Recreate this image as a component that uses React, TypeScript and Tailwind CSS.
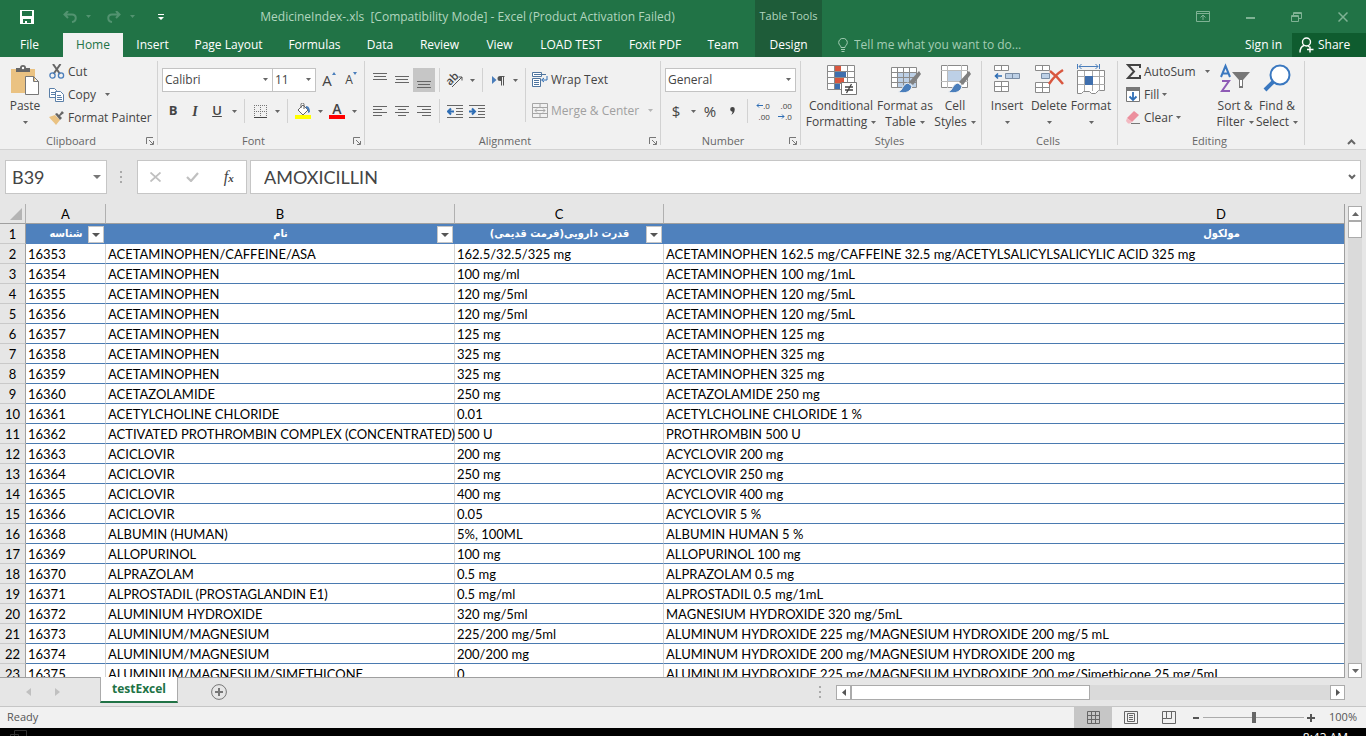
import React from 'react';

const TABS = [
  { label: 'Insert', width: 'w-[59px]' },
  { label: 'Page Layout', width: 'w-[93px]' },
  { label: 'Formulas', width: 'w-[79px]' },
  { label: 'Data', width: 'w-[52px]' },
  { label: 'Review', width: 'w-[67px]' },
  { label: 'View', width: 'w-[53px]' },
  { label: 'LOAD TEST', width: 'w-[90px]' },
  { label: 'Foxit PDF', width: 'w-[78px]' },
  { label: 'Team', width: 'w-[58px]' },
];

const ROWS = [
  ['16353', 'ACETAMINOPHEN/CAFFEINE/ASA', '162.5/32.5/325 mg', 'ACETAMINOPHEN 162.5 mg/CAFFEINE 32.5 mg/ACETYLSALICYLSALICYLIC ACID 325 mg'],
  ['16354', 'ACETAMINOPHEN', '100 mg/ml', 'ACETAMINOPHEN 100 mg/1mL'],
  ['16355', 'ACETAMINOPHEN', '120 mg/5ml', 'ACETAMINOPHEN 120 mg/5mL'],
  ['16356', 'ACETAMINOPHEN', '120 mg/5ml', 'ACETAMINOPHEN 120 mg/5mL'],
  ['16357', 'ACETAMINOPHEN', '125 mg', 'ACETAMINOPHEN 125 mg'],
  ['16358', 'ACETAMINOPHEN', '325 mg', 'ACETAMINOPHEN 325 mg'],
  ['16359', 'ACETAMINOPHEN', '325 mg', 'ACETAMINOPHEN 325 mg'],
  ['16360', 'ACETAZOLAMIDE', '250 mg', 'ACETAZOLAMIDE 250 mg'],
  ['16361', 'ACETYLCHOLINE CHLORIDE', '0.01', 'ACETYLCHOLINE CHLORIDE 1 %'],
  ['16362', 'ACTIVATED PROTHROMBIN COMPLEX (CONCENTRATED)', '500 U', 'PROTHROMBIN 500 U'],
  ['16363', 'ACICLOVIR', '200 mg', 'ACYCLOVIR 200 mg'],
  ['16364', 'ACICLOVIR', '250 mg', 'ACYCLOVIR 250 mg'],
  ['16365', 'ACICLOVIR', '400 mg', 'ACYCLOVIR 400 mg'],
  ['16366', 'ACICLOVIR', '0.05', 'ACYCLOVIR 5 %'],
  ['16368', 'ALBUMIN (HUMAN)', '5%, 100ML', 'ALBUMIN HUMAN 5 %'],
  ['16369', 'ALLOPURINOL', '100 mg', 'ALLOPURINOL 100 mg'],
  ['16370', 'ALPRAZOLAM', '0.5 mg', 'ALPRAZOLAM 0.5 mg'],
  ['16371', 'ALPROSTADIL (PROSTAGLANDIN E1)', '0.5 mg/ml', 'ALPROSTADIL 0.5 mg/1mL'],
  ['16372', 'ALUMINIUM HYDROXIDE', '320 mg/5ml', 'MAGNESIUM HYDROXIDE 320 mg/5mL'],
  ['16373', 'ALUMINIUM/MAGNESIUM', '225/200 mg/5ml', 'ALUMINUM HYDROXIDE 225 mg/MAGNESIUM HYDROXIDE 200 mg/5 mL'],
  ['16374', 'ALUMINIUM/MAGNESIUM', '200/200 mg', 'ALUMINUM HYDROXIDE 200 mg/MAGNESIUM HYDROXIDE 200 mg'],
  ['16375', 'ALUMINIUM/MAGNESIUM/SIMETHICONE', '0', 'ALUMINUM HYDROXIDE 225 mg/MAGNESIUM HYDROXIDE 200 mg/Simethicone 25 mg/5mL'],
];

const HEADERS = ['شناسه', 'نام', 'قدرت دارویی(فرمت قدیمی)', 'مولکول'];

const Tri = ({ className = 'fill-[#666]' }: { className?: string }) => (
  <svg width="5" height="3" viewBox="0 0 5 3" className={`shrink-0 ${className}`}>
    <path d="M0 0h5L2.5 3z" />
  </svg>
);

const Drop = ({ label, className = '' }: { label: string; className?: string }) => (
  <button aria-label={label} className={`flex h-6 w-3 shrink-0 items-center justify-center ${className}`}>
    <Tri />
  </button>
);

const Sep = () => <span className="mx-1 h-6 w-px shrink-0 bg-[#d2d2d2]" />;

interface IconButtonProps {
  label: string;
  active?: boolean;
  children: React.ReactNode;
}

const IconButton = ({ label, active, children }: IconButtonProps) => (
  <button
    aria-label={label}
    className={`flex h-6 w-[22px] shrink-0 items-center justify-center text-[#444] ${active ? 'bg-[#c6c6c6]' : ''}`}
  >
    {children}
  </button>
);

interface GroupProps {
  title: string;
  width: string;
  launcher?: boolean;
  children: React.ReactNode;
}

const Group = ({ title, width, launcher, children }: GroupProps) => (
  <section aria-label={title} className={`relative flex shrink-0 flex-col pt-[3px] ${width}`}>
    <div className="flex h-[70px] pl-1">{children}</div>
    <div className="mt-[3px] flex h-4 items-center">
      <span className={`flex-1 text-center text-[11px] leading-4 text-[#666] ${launcher ? 'pr-5' : 'pl-3 pr-4'}`}>{title}</span>
      {launcher && (
        <button aria-label={`${title} settings`} className="-ml-4 mr-1">
          <svg width="8" height="8" viewBox="0 0 8 8" fill="none" stroke="#777">
            <path d="M.5 7V.5H7M3 3l4 4M7.500 4v3.500H4" />
          </svg>
        </button>
      )}
    </div>
    <span className="absolute right-0 top-1 h-[84px] w-px bg-[#d2d2d2]" />
  </section>
);

interface BigButtonProps {
  width: string;
  lines: [string, string?];
  icon: React.ReactNode;
}

const BigButton = ({ width, lines, icon }: BigButtonProps) => (
  <button className={`flex shrink-0 flex-col items-center pt-1 text-[12px] leading-4 text-[#444] ${width}`}>
    <span className="flex h-8 items-center">{icon}</span>
    <span className="mt-[2px] whitespace-nowrap">{lines[0]}</span>
    <span className="flex h-4 items-center gap-1 whitespace-nowrap">
      {lines[1]}
      <Tri />
    </span>
  </button>
);

const SmallButton = ({ icon, text, arrow }: { icon: React.ReactNode; text: string; arrow?: string }) => (
  <button className="flex h-[23px] items-center whitespace-nowrap text-[12px] text-[#444]">
    <span className="mr-[3px] flex w-4 shrink-0 justify-center">{icon}</span>
    {text}
    {arrow && (
      <span className={arrow}>
        <Tri />
      </span>
    )}
  </button>
);

const Lines = ({ rows, h = 16 }: { rows: [number, number, number][]; h?: number }) => (
  <svg width="14" height={h} viewBox={`0 0 14 ${h}`} stroke="#666">
    {rows.map(([y, a, b]) => (
      <path key={y} d={`M${a} ${y + 0.5}H${b}`} />
    ))}
  </svg>
);

const ComboBox = ({ label, value, width }: { label: string; value: string; width: string }) => (
  <span className={`relative flex h-6 shrink-0 ${width}`}>
    <select
      aria-label={label}
      className="w-full appearance-none border border-[#c3c3c3] bg-white pl-[2px] text-[12px] text-[#444] outline-none"
    >
      <option>{value}</option>
    </select>
    <span className="pointer-events-none absolute right-[5px] top-[10px]">
      <Tri />
    </span>
  </span>
);

const TitleBar = () => (
  <header className="flex h-[57px] shrink-0 bg-[#217346] text-[12px] text-white">
    <div className="flex w-[755px] shrink-0 flex-col">
      <div className="flex h-[33px] items-center">
        <div className="flex w-[180px] shrink-0 items-center pl-5">
          <button aria-label="Save">
            <svg width="14" height="14" viewBox="0 0 14 14">
              <path fill="#fff" fillRule="evenodd" d="M0 0h14v14H0zM2 1v5h10V1zM3 9v4h2v-2h2v2h4V9z" />
            </svg>
          </button>
          <button aria-label="Undo" className="ml-[29px]">
            <svg width="14" height="12" viewBox="0 0 14 12" fill="none" stroke="#529370" strokeWidth="2">
              <path d="M5 0L1.500 3.500 5 7M2 3.500h7c5 0 5 7 0 7.500" />
            </svg>
          </button>
          <span className="ml-[9px]"><Tri className="fill-[#529370]" /></span>
          <button aria-label="Redo" className="ml-[16px]">
            <svg width="14" height="12" viewBox="0 0 14 12" fill="none" stroke="#529370" strokeWidth="2">
              <path d="M9 0l3.500 3.500L9 7M12 3.500H5c-5 0-5 7 0 7.500" />
            </svg>
          </button>
          <span className="ml-[9px]"><Tri className="fill-[#529370]" /></span>
          <button aria-label="Customize Quick Access Toolbar" className="ml-[23px]">
            <svg width="6" height="6" viewBox="0 0 6 6" fill="#fff">
              <path d="M0 0h6v1H0zM0 3h6L3 6z" />
            </svg>
          </button>
        </div>
        <h1 className="flex-1 whitespace-pre text-center text-[#b1d6bf]">
          {'MedicineIndex-.xls  [Compatibility Mode] - Excel (Product Activation Failed)'}
        </h1>
      </div>
      <nav className="flex h-6 items-center">
        <button className="w-[63px] shrink-0 pr-1 text-center">File</button>
        <button className="h-full w-[60px] shrink-0 bg-[#f1f1f1] text-[#217346]">Home</button>
        {TABS.map((tab) => (
          <button key={tab.label} className={`shrink-0 whitespace-nowrap text-center ${tab.width}`}>
            {tab.label}
          </button>
        ))}
      </nav>
    </div>
    <div className="flex w-[67px] shrink-0 flex-col bg-[#1e5c39]">
      <span className="flex h-[33px] items-center justify-center whitespace-nowrap text-[11px] text-[#b1d6bf]">Table Tools</span>
      <button className="h-6">Design</button>
    </div>
    <div className="flex flex-1 flex-col">
      <div className="flex h-[33px] items-center justify-end gap-[36px] pr-[18px]">
        <button aria-label="Ribbon display options">
          <svg width="14" height="11" viewBox="0 0 14 11" fill="none" stroke="#7fb294">
            <path d="M.5.5h13v10H.5zM.5 2.500h13M7 9V4M4.500 6.500L7 4l2.500 2.500" />
          </svg>
        </button>
        <button aria-label="Minimize">
          <svg width="9" height="10" viewBox="0 0 9 10" fill="#7fb294"><path d="M0 5h9v2H0z" /></svg>
        </button>
        <button aria-label="Restore">
          <svg width="11" height="10" viewBox="0 0 11 10" fill="none" stroke="#7fb294">
            <path d="M.5 3.500h7v6h-7zM.5 4.500h7M2.500 3V.5h8v6H8M3 1.500h7" />
          </svg>
        </button>
        <button aria-label="Close">
          <svg width="10" height="10" viewBox="0 0 10 10" stroke="#7fb294" strokeWidth="1.5"><path d="M.5.5l9 9M9.500.5l-9 9" /></svg>
        </button>
      </div>
      <div className="flex h-6 items-center">
        <svg className="ml-4 shrink-0" width="10" height="14" viewBox="0 0 10 14" fill="none" stroke="#a4cdb4">
          <path d="M3 9.500C3 7.500.7 7 .7 4.600a4.300 4.300 0 0 1 8.600 0C9.300 7 7 7.500 7 9.500zM3 11.500h4M3.500 13.500h3" />
        </svg>
        <input
          aria-label="Tell me what you want to do"
          placeholder="Tell me what you want to do..."
          className="ml-[6px] min-w-0 flex-1 bg-transparent outline-none placeholder:text-[#a4cdb4]"
        />
        <button className="mr-[10px] whitespace-nowrap">Sign in</button>
        <button className="flex h-6 w-[74px] items-center gap-1 bg-[#0f5c2f] pl-[7px]">
          <svg width="15" height="16" viewBox="0 0 15 16" fill="none" stroke="#fff" strokeWidth="1.4">
            <circle cx="7.500" cy="5" r="4" />
            <path d="M5 8.500C2 9.500 1 12 1 15.500M9 9l1.500 1M11 9.500v6M8 12.500h6.500" />
          </svg>
          Share
        </button>
      </div>
    </div>
  </header>
);

const GridIcon = ({ children }: { children?: React.ReactNode }) => (
  <svg width="32" height="32" viewBox="0 0 32 32" fill="none" className="overflow-visible">
    {children}
  </svg>
);

const Brush = () => (
  <>
    <path d="M30 7l2 3-8 11-4-3z" fill="#808080" />
    <path d="M19 19l4 3c-1 6-7 8-14 6 5-1 4-8 10-9z" fill="#4a7ebb" stroke="#f1f1f1" />
  </>
);

const Ribbon = () => (
  <div className="flex h-[93px] shrink-0 overflow-hidden border-b border-[#d2d2d2] bg-[#f1f1f1]">
    <Group title="Clipboard" width="w-[158px]" launcher>
      <BigButton
        width="w-[42px]"
        lines={['Paste']}
        icon={
          <svg width="30" height="30" viewBox="0 0 30 30">
            <path d="M1 4h24v24H1z" fill="#eac282" />
            <path d="M6 7V3h4a3 3 0 0 1 6 0h4v4z" fill="#666" />
            <circle cx="13" cy="3" r="1.200" fill="#fff" />
            <path d="M15.500 11.500h8l5 5v13h-13zM23.500 11.500v5h5" fill="#fff" stroke="#777" />
          </svg>
        }
      />
      <div className="ml-[3px] flex flex-col">
        <SmallButton
          text="Cut"
          icon={
            <svg width="16" height="15" viewBox="0 0 16 15" fill="none">
              <path d="M4 0l7 10M11.500 0l-7 10" stroke="#666" strokeWidth="2" />
              <circle cx="3.500" cy="11.500" r="2.600" stroke="#4a7ebb" strokeWidth="1.300" />
              <circle cx="12" cy="11.500" r="2.600" stroke="#4a7ebb" strokeWidth="1.300" />
            </svg>
          }
        />
        <SmallButton
          text="Copy"
          arrow="ml-[9px]"
          icon={
            <svg width="16" height="14" viewBox="0 0 16 14" fill="#fff" stroke="#5a7fa8">
              <path d="M.5.5h5l2 2v7h-7zM2 4.500h4M2 6.500h4" />
              <path d="M6.500 3.500h5l3 3v7h-8zM8 7.500h4M8 9.500h5M8 11.500h5" />
            </svg>
          }
        />
        <SmallButton
          text="Format Painter"
          icon={
            <svg width="16" height="14" viewBox="0 0 16 14">
              <path d="M0 6l6-2 5 5-4 5C5 11 2 9 0 6z" fill="#eac282" />
              <path d="M6 3l2-1 2 2 3-4 2 2-4 3 2 2-2 2z" fill="#666" />
            </svg>
          }
        />
      </div>
    </Group>

    <Group title="Font" width="w-[207px]" launcher>
      <div className="flex flex-col gap-[7px] pt-2">
        <div className="flex">
          <ComboBox label="Font" value="Calibri" width="w-[111px]" />
          <span className="-ml-px flex"><ComboBox label="Font size" value="11" width="w-[44px]" /></span>
          <span className="ml-[2px] flex">
            <IconButton label="Increase font size">
              <span className="flex items-start text-[15px] leading-4">
                A
                <svg width="4" height="3" viewBox="0 0 4 3" fill="#4a7ebb"><path d="M0 3h4L2 0z" /></svg>
              </span>
            </IconButton>
            <IconButton label="Decrease font size">
              <span className="flex items-start text-[12px] leading-4">
                A
                <svg width="4" height="3" viewBox="0 0 4 3" fill="#4a7ebb"><path d="M0 0h4L2 3z" /></svg>
              </span>
            </IconButton>
          </span>
        </div>
        <div className="flex">
          <IconButton label="Bold"><span className="text-[13px] font-bold">B</span></IconButton>
          <IconButton label="Italic"><span className="font-['Liberation_Serif',serif] text-[14px] font-bold italic">I</span></IconButton>
          <IconButton label="Underline"><span className="text-[13px] font-semibold underline">U</span></IconButton>
          <Drop label="Underline style" />
          <Sep />
          <IconButton label="Borders">
            <svg width="13" height="13" viewBox="0 0 13 13" fill="none" stroke="#777">
              <path strokeDasharray="1 1" d="M.5 0v12M6.500 0v12M12.500 0v12M0 .5h13M0 6.500h13" />
              <path d="M0 12.500h13" stroke="#444" />
            </svg>
          </IconButton>
          <Drop label="Border style" />
          <Sep />
          <IconButton label="Fill color">
            <svg width="17" height="16" viewBox="0 0 17 16" fill="none">
              <path d="M3 7l5-5 5 5-5 5zM6 5V1.500a1.500 1.500 0 0 1 3 0V6" fill="#fff" stroke="#666" />
              <path d="M11 3c3 0 4 3 4 6l-2 1c0-3 0-4-2-5z" fill="#4a7ebb" />
              <path d="M0 12h16v4H0z" fill="#ff0" />
            </svg>
          </IconButton>
          <Drop label="Fill color menu" />
          <IconButton label="Font color">
            <span className="flex h-4 w-4 justify-center border-b-4 border-[#f00] text-[14px] font-semibold leading-3">A</span>
          </IconButton>
          <Drop label="Font color menu" />
        </div>
      </div>
    </Group>

    <Group title="Alignment" width="w-[296px]" launcher>
      <div className="flex flex-col gap-[7px] pt-2">
        <div className="flex">
          <IconButton label="Top align"><Lines rows={[[1, 0, 14], [4, 1, 13], [7, 0, 14]]} /></IconButton>
          <IconButton label="Middle align"><Lines rows={[[4, 0, 14], [7, 1, 13], [10, 0, 14]]} /></IconButton>
          <IconButton label="Bottom align" active><Lines rows={[[9, 0, 14], [12, 1, 13], [15, 0, 14]]} /></IconButton>
          <Sep />
          <IconButton label="Orientation">
            <svg className="overflow-visible" width="17" height="16" viewBox="0 0 17 16" fill="none" stroke="#555">
              <text x="0" y="11" transform="rotate(-45 5 9)" fontSize="11" fontWeight="600" fill="#444" stroke="none">ab</text>
              <path d="M5 15L15 5M11.500 5H15v3.500" />
            </svg>
          </IconButton>
          <Drop label="Orientation menu" />
          <Sep />
          <IconButton label="Text direction">
            <svg width="13" height="11" viewBox="0 0 13 11">
              <path d="M0 1l4.500 4L0 9z" fill="#4a7ebb" />
              <path d="M12.500 1H8a2.500 2.500 0 0 0 0 5h1v4.500h1V2h1v8.500h1V2h.5z" fill="#555" />
            </svg>
          </IconButton>
          <Drop label="Text direction menu" />
        </div>
        <div className="flex">
          <IconButton label="Align left"><Lines h={12} rows={[[1, 0, 14], [4, 0, 9], [7, 0, 14], [10, 0, 9]]} /></IconButton>
          <IconButton label="Center"><Lines h={12} rows={[[1, 0, 14], [4, 3, 11], [7, 0, 14], [10, 3, 11]]} /></IconButton>
          <IconButton label="Align right"><Lines h={12} rows={[[1, 0, 14], [4, 5, 14], [7, 0, 14], [10, 5, 14]]} /></IconButton>
          <Sep />
          <IconButton label="Decrease indent">
            <svg width="16" height="13" viewBox="0 0 16 13" fill="none" stroke="#666">
              <path d="M0 .5h16M9 3.500h7M9 6.500h7M9 9.500h7M0 12.500h16" />
              <path d="M7 6.500H1M4 3.500l-3 3 3 3" stroke="#2f6eb5" strokeWidth="2" />
            </svg>
          </IconButton>
          <IconButton label="Increase indent">
            <svg width="16" height="13" viewBox="0 0 16 13" fill="none" stroke="#666">
              <path d="M0 .5h16M9 3.500h7M9 6.500h7M9 9.500h7M0 12.500h16" />
              <path d="M0 6.500h6M3 3.500l3 3-3 3" stroke="#2f6eb5" strokeWidth="2" />
            </svg>
          </IconButton>
        </div>
      </div>
      <span className="ml-1 mr-[6px] mt-2 h-[54px] w-px bg-[#d2d2d2]" />
      <div className="flex flex-col gap-2 pt-2">
        <SmallButton
          text="Wrap Text"
          icon={
            <svg width="16" height="15" viewBox="0 0 16 15" fill="#fff" stroke="#4f759f">
              <path d="M.5.5h9v4h-9zM2 2.500h12M.5 6.500h8v8h-8zM2 8.500h5M2 10.500h5M2 12.500h5" />
              <path d="M15 4v4h-5M12 6l-2.500 2L12 10" fill="none" stroke="#2f6eb5" />
            </svg>
          }
        />
        <button className="flex h-[23px] items-center whitespace-nowrap text-[12px] text-[#a0a0a0]">
          <svg className="mr-[3px]" width="16" height="15" viewBox="0 0 16 15" fill="none" stroke="#a6a6a6">
            <path d="M.5.5h15v14H.5zM.5 4.500h15M.5 10.500h15M8 .5v4M8 10.500v4M3 7.500h10M5 5.500l-2 2 2 2M11 5.500l2 2-2 2" />
          </svg>
          Merge &amp; Center
          <span className="ml-[9px]"><Tri className="fill-[#b5b5b5]" /></span>
        </button>
      </div>
    </Group>

    <Group title="Number" width="w-[140px]" launcher>
      <div className="flex flex-col gap-[7px] pt-2">
        <ComboBox label="Number format" value="General" width="w-[131px]" />
        <div className="flex">
          <IconButton label="Accounting format"><span className="text-[15px]">$</span></IconButton>
          <Drop label="Accounting format menu" />
          <IconButton label="Percent"><span className="text-[15px]">%</span></IconButton>
          <IconButton label="Comma">
            <svg width="5" height="8" viewBox="0 0 5 8" fill="#444"><path d="M2.500 0a2.200 2.200 0 0 1 2.200 2.500C4.700 5 3.500 7 1 8c1-1.200 1.500-2.200 1.500-3.300A2.300 2.300 0 0 1 2.500 0z" /></svg>
          </IconButton>
          <Sep />
          <IconButton label="Increase decimal">
            <span className="flex flex-col items-end text-[8px] leading-[11px]">
              <span className="flex items-center">
                <svg width="7" height="5" viewBox="0 0 7 5" fill="none" stroke="#2f6eb5"><path d="M7 2.500H1M3 .5l-2 2 2 2" /></svg>
                .0
              </span>
              <span>.00</span>
            </span>
          </IconButton>
          <IconButton label="Decrease decimal">
            <span className="flex flex-col items-end text-[8px] leading-[11px]">
              <span>.00</span>
              <span className="flex items-center">
                <svg width="7" height="5" viewBox="0 0 7 5" fill="none" stroke="#2f6eb5"><path d="M0 2.500h6M4 .5l2 2-2 2" /></svg>
                .0
              </span>
            </span>
          </IconButton>
        </div>
      </div>
    </Group>

    <Group title="Styles" width="w-[181px]">
      <BigButton
        width="w-[72px]"
        lines={['Conditional', 'Formatting']}
        icon={
          <GridIcon>
            <path d="M2.500 1.500h27v24h-27z" fill="#fff" />
            <path d="M10 2h6v6h-6zM10 14h9v6h-9z" fill="#d9573f" />
            <path d="M10 8h11v6H10zM10 20h5v6h-5z" fill="#3f6fae" />
            <path d="M2.500 1.500h27v24h-27zM9.500 1v25M22.500 1v25M2 7.500h28M2 13.500h28M2 19.500h28" stroke="#8a8a8a" />
            <path d="M16.500 18.500h15v12h-15z" fill="#fff" stroke="#777" />
            <path d="M20 23h8M20 26h8M26.500 20l-5 9" stroke="#444" strokeWidth="1.300" />
          </GridIcon>
        }
      />
      <BigButton
        width="w-[56px]"
        lines={['Format as', 'Table']}
        icon={
          <GridIcon>
            <path d="M2.500 3.500h25v20h-25z" fill="#fff" />
            <path d="M9 9h18v14H9z" fill="#bdd0e6" />
            <path d="M2.500 3.500h25v20h-25zM8.500 3v21M14.500 3v21M20.500 3v21M2 8.500h26M2 13.500h26M2 18.500h26" stroke="#8a8a8a" />
            <Brush />
          </GridIcon>
        }
      />
      <BigButton
        width="w-[44px]"
        lines={['Cell', 'Styles']}
        icon={
          <GridIcon>
            <path d="M2.500 1.500h26v22h-26z" fill="#fff" stroke="#8a8a8a" />
            <path d="M8.500 1v23M22.500 1v23M2 6.500h27M2 17.500h27" stroke="#bbb" />
            <path d="M9 7h13v10H9z" fill="#bdd0e6" />
            <Brush />
          </GridIcon>
        }
      />
    </Group>

    <Group title="Cells" width="w-[136px]">
      <BigButton
        width="w-[42px]"
        lines={['Insert']}
        icon={
          <GridIcon>
            <path d="M3.500 1.500h14v5h-14zM10.500 1.500v5M3.500 17.500h14v10h-14zM10.500 17.500v10M3.500 22.500h14" fill="#fff" stroke="#8a8a8a" />
            <path d="M14.500 9.500h14v5h-14zM21.500 9.500v5" fill="#bdd0e6" stroke="#7a8da5" />
            <path d="M11 12H4.500M7 9.500L4.500 12 7 14.500" stroke="#2f6eb5" strokeWidth="1.600" />
          </GridIcon>
        }
      />
      <BigButton
        width="w-[42px]"
        lines={['Delete']}
        icon={
          <GridIcon>
            <path d="M2.500 1.500h14v5h-14zM9.500 1.500v5M2.500 18.500h14v10h-14zM9.500 18.500v10M2.500 23.500h14" fill="#fff" stroke="#8a8a8a" />
            <path d="M8.500 9.500h8v5h-8z" fill="#bdd0e6" stroke="#7a8da5" />
            <path d="M17 7c4 3 9 8 13 13M30 6C25 9 20 14 16 20" stroke="#d9573f" strokeWidth="2.500" />
          </GridIcon>
        }
      />
      <BigButton
        width="w-[42px]"
        lines={['Format']}
        icon={
          <GridIcon>
            <path d="M2.500 0v5M24.500 0v5M4 2.500h19M6.500 0L4 2.500 6.500 5M20.500 0L23 2.500 20.500 5" stroke="#4a7ebb" />
            <path d="M2.500 6.500h27v20h-6l-3 3h-4l-2-2h-6l-2 2h-4z" fill="#fff" stroke="#8a8a8a" />
            <path d="M9.500 7v20M17.500 7v20M24.500 7v20M3 12.500h27M3 20.500h27" stroke="#aaa" />
            <path d="M10 12h8v9h-8z" fill="#3f6fae" />
          </GridIcon>
        }
      />
    </Group>

    <Group title="Editing" width="w-[187px]">
      <div className="flex w-[92px] flex-col pl-[3px]">
        <SmallButton
          text="AutoSum"
          arrow="ml-[9px]"
          icon={
            <svg width="15" height="15" viewBox="0 0 15 15" fill="none" stroke="#444" strokeWidth="2">
              <path d="M14 4V1H2l6 6.500L2 14h12v-3" />
            </svg>
          }
        />
        <SmallButton
          text="Fill"
          arrow="ml-[3px]"
          icon={
            <svg width="14" height="15" viewBox="0 0 14 15" fill="none">
              <path d="M.5.5h13v14H.5z" fill="#fff" stroke="#777" />
              <path d="M0 0h14v4H0z" fill="#777" />
              <path d="M7 5v8M3.500 9.500L7 13l3.500-3.500" stroke="#2f6eb5" strokeWidth="1.800" />
            </svg>
          }
        />
        <SmallButton
          text="Clear"
          arrow="ml-[3px]"
          icon={
            <svg width="14" height="13" viewBox="0 0 14 13">
              <path d="M8 0l5 4-7 7-5-4z" fill="#ec8f9d" />
              <path d="M1 7l5 4-2 1.500H2L0 10z" fill="#f3b9c1" />
              <path d="M5 12.500h9" stroke="#777" />
            </svg>
          }
        />
      </div>
      <BigButton
        width="w-[42px]"
        lines={['Sort &', 'Filter']}
        icon={
          <GridIcon>
            <path d="M2 13L6.500 2 11 13M3.500 9.500h6" stroke="#3a78c0" strokeWidth="2" />
            <path d="M3 17h7L3 27h8" stroke="#8e5bb5" strokeWidth="2" />
            <path d="M13 8h18l-7 8v8h-4v-8z" fill="#777" />
            <path d="M21 16h2v6h-2z" fill="#fff" />
          </GridIcon>
        }
      />
      <BigButton
        width="w-[42px]"
        lines={['Find &', 'Select']}
        icon={
          <GridIcon>
            <path d="M13 17L4 26" stroke="#3a78c0" strokeWidth="4" />
            <circle cx="19" cy="11" r="9.500" fill="#fff" stroke="#3a78c0" strokeWidth="2" />
          </GridIcon>
        }
      />
    </Group>
    <div className="flex flex-1 items-end justify-end pb-1 pr-[10px]">
      <button aria-label="Collapse ribbon">
        <svg width="9" height="6" viewBox="0 0 9 6" fill="none" stroke="#666" strokeWidth="2"><path d="M1 5l3.500-3.500L8 5" /></svg>
      </button>
    </div>
  </div>
);

const FormulaBar = () => (
  <div className="flex h-[54px] shrink-0 items-start bg-[#e6e6e6] pl-[5px] pr-[5px] pt-[10px] font-[Lato,sans-serif] text-[18px] text-[#444]">
    <div className="flex h-[34px] w-[102px] shrink-0 items-center border border-[#c6c6c6] bg-white pl-[6px] pr-[5px]">
      <input aria-label="Name box" defaultValue="B39" className="min-w-0 flex-1 bg-transparent outline-none" />
      <svg width="8" height="4" viewBox="0 0 8 4" fill="#777"><path d="M0 0h8L4 4z" /></svg>
    </div>
    <svg className="ml-[13px] mt-[11px] shrink-0" width="2" height="12" viewBox="0 0 2 12" fill="#aaa">
      <path d="M0 0h2v2H0zM0 5h2v2H0zM0 10h2v2H0z" />
    </svg>
    <div className="ml-[15px] flex h-[34px] w-[110px] shrink-0 items-center justify-around border border-[#c6c6c6] bg-white">
      <button aria-label="Cancel">
        <svg width="11" height="10" viewBox="0 0 11 10" stroke="#c0c0c0" strokeWidth="1.800"><path d="M.5.5l10 9M10.500.5l-10 9" /></svg>
      </button>
      <button aria-label="Enter">
        <svg width="13" height="10" viewBox="0 0 13 10" fill="none" stroke="#c0c0c0" strokeWidth="2.200"><path d="M1 5l4 4 7-8" /></svg>
      </button>
      <button aria-label="Insert function" className="font-['Liberation_Serif',serif] text-[16px] italic leading-5 text-[#444]">
        f<span className="text-[11px] font-bold">x</span>
      </button>
    </div>
    <div className="ml-[3px] flex h-[34px] flex-1 items-center border border-[#c6c6c6] bg-white pl-[13px] pr-1">
      <input aria-label="Formula" defaultValue="AMOXICILLIN" className="min-w-0 flex-1 bg-transparent outline-none" />
      <svg width="8" height="6" viewBox="0 0 8 6" fill="none" stroke="#666" strokeWidth="2"><path d="M1 1l3 3 3-3" /></svg>
    </div>
  </div>
);

const headCell = 'border-b border-r border-b-[#9f9f9f] border-r-[#b0b0b0] p-0 font-normal';
const rowCell = 'border-b border-r border-b-[#c9c9c9] border-r-[#9f9f9f] bg-[#e6e6e6] p-0 text-center font-normal';

const Sheet = () => (
  <main className="flex min-h-0 flex-1 bg-[#e6e6e6]">
    <div className="min-w-0 flex-1 overflow-hidden border-b border-r border-[#9f9f9f]">
      <table className="w-[1779px] table-fixed border-separate border-spacing-0 whitespace-nowrap bg-white font-[Lato,sans-serif] text-[13px] leading-4 text-black">
        <colgroup>
          <col className="w-[26px]" />
          <col className="w-[80px]" />
          <col className="w-[349px]" />
          <col className="w-[209px]" />
          <col className="w-[1115px]" />
        </colgroup>
        <thead>
          <tr className="h-5 bg-[#e6e6e6]">
            <th className={headCell}>
              <svg className="ml-[10px]" width="12" height="12" viewBox="0 0 12 12" fill="#b4b4b4"><path d="M12 0v12H0z" /></svg>
            </th>
            {['A', 'B', 'C', 'D'].map((c) => (
              <th key={c} scope="col" className={headCell}>{c}</th>
            ))}
          </tr>
        </thead>
        <tbody>
          <tr className="h-5">
            <th scope="row" className={rowCell}>1</th>
            {HEADERS.map((h) => (
              <th
                key={h}
                dir="rtl"
                className="relative bg-[#4f81bd] p-0 text-center font-['DejaVu_Sans_Condensed','DejaVu_Sans',sans-serif] text-[11px] font-bold text-white"
              >
                {h}
                <button
                  aria-label={`Filter ${h}`}
                  className="absolute right-[2px] top-[2px] flex h-[17px] w-4 items-center justify-center border border-[#c6c6c6] bg-white"
                >
                  <svg width="8" height="4" viewBox="0 0 8 4" fill="#555"><path d="M0 0h8L4 4z" /></svg>
                </button>
              </th>
            ))}
          </tr>
          {ROWS.map((row, i) => (
            <tr key={row[0]} className="h-5">
              <th scope="row" className={rowCell}>{i + 2}</th>
              {row.map((cell, j) => (
                <td key={j} className="border-b border-r border-b-[#4a7ab0] border-r-[#d4d4d4] p-0 pl-[2px]">{cell}</td>
              ))}
            </tr>
          ))}
        </tbody>
      </table>
    </div>
    <div className="flex w-[21px] shrink-0 flex-col pl-[3px] pr-1 pt-[2px]">
      <button aria-label="Scroll up" className="flex h-[15px] shrink-0 items-center justify-center border border-[#ababab] bg-white">
        <svg width="7" height="4" viewBox="0 0 7 4" fill="#666"><path d="M0 4h7L3.500 0z" /></svg>
      </button>
      <div className="flex-1 bg-[#dadada]">
        <div className="h-[17px] border border-[#ababab] bg-white" />
      </div>
      <button aria-label="Scroll down" className="flex h-[15px] shrink-0 items-center justify-center border border-[#ababab] bg-white">
        <svg width="7" height="4" viewBox="0 0 7 4" fill="#666"><path d="M0 0h7L3.500 4z" /></svg>
      </button>
    </div>
  </main>
);

const SheetTabs = () => (
  <div className="flex h-7 shrink-0 items-start bg-[#e6e6e6]">
    <div className="flex h-7 w-[100px] shrink-0 items-center gap-6 pl-[26px]">
      <button aria-label="Previous sheet">
        <svg width="5" height="8" viewBox="0 0 5 8" fill="#c0c0c0"><path d="M5 0v8L0 4z" /></svg>
      </button>
      <button aria-label="Next sheet">
        <svg width="5" height="8" viewBox="0 0 5 8" fill="#c0c0c0"><path d="M0 0v8l5-4z" /></svg>
      </button>
    </div>
    <button className="-mt-px h-[26px] w-[78px] shrink-0 border-x border-b-2 border-x-[#ababab] border-b-[#217346] bg-white text-[12px] font-bold text-[#217346]">
      testExcel
    </button>
    <button aria-label="New sheet" className="ml-[33px] mt-[6px]">
      <svg width="16" height="16" viewBox="0 0 16 16" fill="none" stroke="#777">
        <circle cx="8" cy="8" r="7.400" />
        <path d="M4 8h8M8 4v8" strokeWidth="2" />
      </svg>
    </button>
    <svg className="ml-auto mt-2 shrink-0" width="2" height="12" viewBox="0 0 2 12" fill="#aaa">
      <path d="M0 0h2v2H0zM0 5h2v2H0zM0 10h2v2H0z" />
    </svg>
    <div className="ml-[15px] mr-[21px] mt-[7px] flex h-[15px] w-[509px] shrink-0 bg-[#dadada]">
      <button aria-label="Scroll left" className="flex w-[15px] items-center justify-center border border-[#ababab] bg-white">
        <svg width="4" height="7" viewBox="0 0 4 7" fill="#555"><path d="M4 0v7L0 3.500z" /></svg>
      </button>
      <div className="w-[239px] border border-[#ababab] bg-white" />
      <button aria-label="Scroll right" className="ml-auto flex w-[15px] items-center justify-center border border-[#ababab] bg-white">
        <svg width="4" height="7" viewBox="0 0 4 7" fill="#555"><path d="M0 0v7l4-3.500z" /></svg>
      </button>
    </div>
  </div>
);

const StatusBar = () => (
  <footer className="flex h-[22px] shrink-0 items-center border-t border-[#c6c6c6] bg-[#f1f1f1] pl-[7px] text-[11px] text-[#555]">
    <span className="flex-1">Ready</span>
    <button aria-label="Normal view" className="flex h-full w-[38px] items-center justify-center bg-[#c6c6c6]">
      <svg width="13" height="13" viewBox="0 0 13 13" fill="none" stroke="#666"><path d="M.5.5h12v12H.5zM4.500 0v13M8.500 0v13M0 4.500h13M0 8.500h13" /></svg>
    </button>
    <button aria-label="Page layout view" className="flex h-full w-[38px] items-center justify-center">
      <svg width="14" height="13" viewBox="0 0 14 13" fill="none" stroke="#666"><path d="M.5.5h13v12H.5zM3.500 2.500h7v8h-7zM5 4.500h4M5 6.500h4M5 8.500h4" /></svg>
    </button>
    <button aria-label="Page break view" className="flex h-full w-[38px] items-center justify-center">
      <svg width="14" height="13" viewBox="0 0 14 13" fill="none" stroke="#666"><path d="M.5.5h13v12H.5zM4.500 0v7.500h5V0M.5 7.500h4" /></svg>
    </button>
    <button aria-label="Zoom out" className="ml-1">
      <svg width="8" height="8" viewBox="0 0 8 8" fill="#555"><path d="M1 3h6v2H1z" /></svg>
    </button>
    <input
      type="range"
      aria-label="Zoom"
      min={0}
      max={200}
      defaultValue={100}
      className="mx-[3px] h-3 w-[101px] appearance-none bg-[linear-gradient(#ababab,#ababab)] bg-[length:100%_1px] bg-center bg-no-repeat [&::-webkit-slider-thumb]:h-[11px] [&::-webkit-slider-thumb]:w-1 [&::-webkit-slider-thumb]:appearance-none [&::-webkit-slider-thumb]:bg-[#666]"
    />
    <button aria-label="Zoom in">
      <svg width="8" height="8" viewBox="0 0 8 8" fill="#555"><path d="M3 0h2v3h3v2H5v3H3V5H0V3h3z" /></svg>
    </button>
    <span className="w-[51px] pr-[9px] text-right">100%</span>
  </footer>
);

const TaskBar = () => (
  <div className="flex h-2 shrink-0 items-start justify-between overflow-hidden bg-black">
    <svg className="ml-[10px] mt-[2px]" width="18" height="14" viewBox="0 0 18 14" fill="none" stroke="#333">
      <path d="M4.500.5h12v9h-12zM.5 4.500h8v6h-8z" />
    </svg>
    <span className="pr-[18px] pt-[2px] text-[12px] leading-4 text-white">8:43 AM</span>
  </div>
);

export default function App() {
  return (
    <div className="flex h-screen flex-col overflow-hidden bg-[#e6e6e6] font-['Open_Sans',sans-serif]">
      <TitleBar />
      <Ribbon />
      <FormulaBar />
      <Sheet />
      <SheetTabs />
      <StatusBar />
      <TaskBar />
    </div>
  );
}
